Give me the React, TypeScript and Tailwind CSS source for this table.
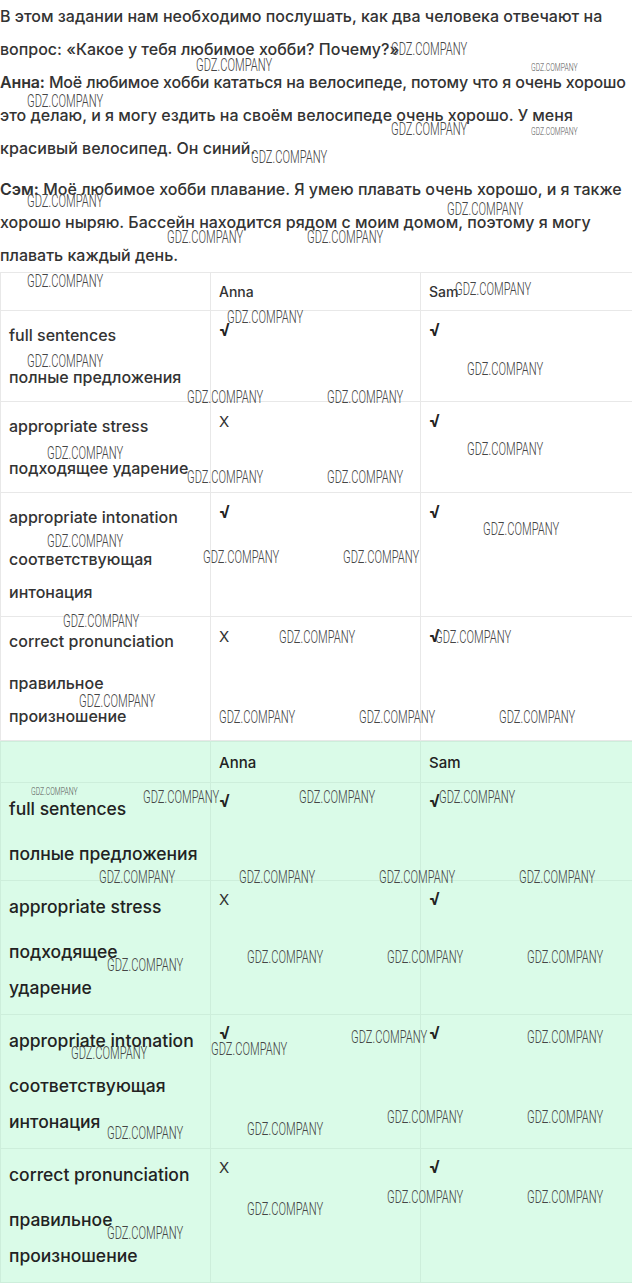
import React from 'react';

type Row = { en: string; ru: string; anna: string; sam: string };

const rows: Row[] = [
  { en: 'full sentences', ru: 'полные предложения', anna: '√', sam: '√' },
  { en: 'appropriate stress', ru: 'подходящее ударение', anna: 'X', sam: '√' },
  { en: 'appropriate intonation', ru: 'соответствующая интонация', anna: '√', sam: '√' },
  { en: 'correct pronunciation', ru: 'правильное произношение', anna: 'X', sam: '√' },
];

// watermark positions: [left, centerY, small]
const marks: [number, number, boolean][] = [
  [391, 50, false], [196, 66, false], [531, 68, true], [27, 102, false], [391, 130, false],
  [531, 132, true], [251, 158, false], [27, 202, false], [447, 210, false], [167, 238, false],
  [307, 238, false], [27, 282, false], [455, 290, false], [227, 318, false], [27, 362, false],
  [467, 370, false], [187, 398, false], [327, 398, false], [47, 454, false], [467, 450, false],
  [187, 478, false], [327, 478, false], [47, 542, false], [483, 530, false], [203, 558, false],
  [343, 558, false], [63, 622, false], [279, 638, false], [435, 638, false], [79, 702, false],
  [219, 718, false], [359, 718, false], [499, 718, false], [31, 792, true], [143, 798, false],
  [299, 798, false], [439, 798, false], [99, 878, false], [239, 878, false], [379, 878, false],
  [519, 878, false], [107, 966, false], [247, 958, false], [387, 958, false], [527, 958, false],
  [71, 1054, false], [211, 1050, false], [351, 1038, false], [527, 1038, false], [107, 1134, false],
  [247, 1130, false], [387, 1118, false], [527, 1118, false], [247, 1210, false], [107, 1234, false],
  [387, 1198, false], [527, 1198, false],
];

function Mark({ x, y, small }: { x: number; y: number; small: boolean }) {
  return (
    <span
      className={
        small
          ? 'absolute whitespace-nowrap font-["Roboto",sans-serif] font-light text-[11px] leading-none text-[#555] origin-left scale-x-[0.62]'
          : 'absolute whitespace-nowrap font-["Roboto",sans-serif] font-light text-[18px] leading-none text-[#444] origin-left scale-x-[0.62]'
      }
      style={{ left: x, top: small ? y - 6 : y - 10 }}
    >
      GDZ.COMPANY
    </span>
  );
}

function Tick({ v }: { v: string }) {
  if (v === 'X') {
    return <span className="font-normal text-[15px] text-[#333]">X</span>;
  }
  return <span className="font-bold text-[17px] text-[#222]">√</span>;
}

export default function App() {
  return (
    <div className="relative w-[632px] overflow-hidden bg-white font-['Inter',sans-serif] font-medium text-[#333]">
      <p className="whitespace-nowrap text-[16px] leading-[33px]">
        В этом задании нам необходимо послушать, как два человека отвечают на
        <br />
        вопрос: «Какое у тебя любимое хобби? Почему?»
        <br />
        <span className="tracking-[-0.15px]">
          <b className="font-semibold">Анна:</b> Моё любимое хобби кататься на велосипеде, потому что я очень хорошо
        </span>
        <br />
        это делаю, и я могу ездить на своём велосипеде очень хорошо. У меня
        <br />
        красивый велосипед. Он синий.
      </p>
      <p className="mt-[8px] whitespace-nowrap text-[16px] leading-[33px]">
        <b className="font-semibold">Сэм:</b> Моё любимое хобби плавание. Я умею плавать очень хорошо, и я также
        <br />
        хорошо ныряю. Бассейн находится рядом с моим домом, поэтому я могу
        <br />
        плавать каждый день.
      </p>

      <table className="w-[632px] table-fixed border-collapse">
        <colgroup>
          <col className="w-[210px]" />
          <col className="w-[210px]" />
          <col className="w-[212px]" />
        </colgroup>
        <thead>
          <tr>
            <th className="border border-[#e8e8e8] px-2 pt-2 pb-[7px]"></th>
            <th className="border border-[#e8e8e8] px-2 pt-2 pb-[7px] text-left text-[14px] leading-[22px] font-medium">Anna</th>
            <th className="border border-[#e8e8e8] px-2 pt-2 pb-[7px] text-left text-[14px] leading-[22px] font-medium">Sam</th>
          </tr>
        </thead>
        <tbody>
          {rows.map((r) => (
            <tr key={r.en}>
              <td className="border border-[#e8e8e8] px-2 pt-2 pb-[7px] align-top text-[16px] leading-[33px]">
                <p>{r.en}</p>
                <p className="mt-[9px]">{r.ru}</p>
              </td>
              <td className="border border-[#e8e8e8] px-2 pt-2 pb-[7px] align-top leading-[22px]">
                <Tick v={r.anna} />
              </td>
              <td className="border border-[#e8e8e8] px-2 pt-2 pb-[7px] align-top leading-[22px]">
                <Tick v={r.sam} />
              </td>
            </tr>
          ))}
        </tbody>
      </table>

      <table className="w-[632px] table-fixed border-collapse bg-[#dafbe8]">
        <colgroup>
          <col className="w-[210px]" />
          <col className="w-[210px]" />
          <col className="w-[212px]" />
        </colgroup>
        <thead>
          <tr>
            <th className="border border-[#cdeedb] px-2 pt-2 pb-[7px]"></th>
            <th className="border border-[#cdeedb] px-2 pt-2 pb-[7px] text-left text-[15px] leading-[25px] font-medium text-[#222]">Anna</th>
            <th className="border border-[#cdeedb] px-2 pt-2 pb-[7px] text-left text-[15px] leading-[25px] font-medium text-[#222]">Sam</th>
          </tr>
        </thead>
        <tbody>
          {rows.map((r) => (
            <tr key={r.en}>
              <td className="border border-[#cdeedb] p-2 align-top text-[17.5px] leading-[36px] text-[#222]">
                <p>{r.en}</p>
                <p className="mt-[9px]">{r.ru}</p>
              </td>
              <td className="border border-[#cdeedb] p-2 align-top leading-[20px]">
                <Tick v={r.anna} />
              </td>
              <td className="border border-[#cdeedb] p-2 align-top leading-[20px]">
                <Tick v={r.sam} />
              </td>
            </tr>
          ))}
        </tbody>
      </table>

      <div className="pointer-events-none absolute inset-0">
        {marks.map(([x, y, s], i) => (
          <Mark key={i} x={x} y={y} small={s} />
        ))}
      </div>
    </div>
  );
}
